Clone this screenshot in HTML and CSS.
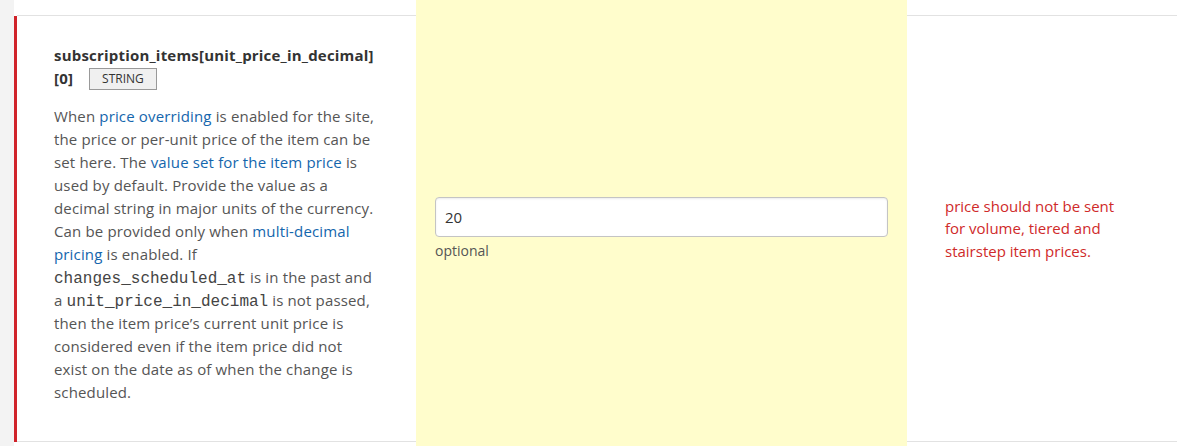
FILE: index.html
```html
<!DOCTYPE html>
<html>
<head>
<meta charset="utf-8">
<link rel="stylesheet" href="styles.css">
</head>
<body>
<div class="page">
  <div class="row row-prev">
    <div class="cell cell-desc"></div>
    <div class="cell cell-input"></div>
    <div class="cell cell-note"></div>
  </div>
  <div class="row row-active">
    <div class="cell cell-desc">
      <div class="param-name">subscription_items[unit_price_in_decimal]<wbr>[0]<span class="badge">STRING</span></div>
      <p class="desc">When <a href="#">price overriding</a> is enabled for the site, the price or per-unit price of the item can be set here. The <a href="#">value set for the item price</a> is used by default. Provide the value as a decimal string in major units of the currency. Can be provided only when <a href="#">multi-decimal pricing</a> is enabled. If <code>changes_scheduled_at</code> is in the past and a <code>unit_price_in_decimal</code> is not passed, then the item price’s current unit price is considered even if the item price did not exist on the date as of when the change is scheduled.</p>
    </div>
    <div class="cell cell-input">
      <div class="field">
        <input class="text-input" type="text" value="20">
        <div class="hint">optional</div>
      </div>
    </div>
    <div class="cell cell-note">
      <p class="note">price should not be sent for volume, tiered and stairstep item prices.</p>
    </div>
  </div>
  <div class="row row-next">
    <div class="cell cell-desc"></div>
    <div class="cell cell-input"></div>
    <div class="cell cell-note"></div>
  </div>
</div>
</body>
</html>
```
FILE: styles.css
```css
html, body {
  margin: 0;
  padding: 0;
}
body {
  background: #f3f3f3;
  font-family: "Open Sans", "Noto Sans", sans-serif;
  overflow: hidden;
}
.page {
  margin-left: 14px;
  background: #fff;
  height: 446px;
}
.row {
  display: grid;
  grid-template-columns: 402px 491px 1fr;
}
.row-prev {
  height: 16px;
}
.row-prev .cell-desc,
.row-next .cell-desc {
  margin-left: 3px;
}
.row-prev .cell-desc,
.row-prev .cell-note {
  border-bottom: 1px solid #e2e2e2;
}
.row-active {
  grid-template-columns: 399px 491px 1fr;
  height: 426px;
  border-left: 3px solid #d0232a;
}
.row-active .cell-desc,
.row-active .cell-note {
  border-bottom: 1px solid #e2e2e2;
}
.row-next {
  height: 4px;
}
.cell-input {
  background: #fffdcc;
}
.row-active .cell-desc {
  padding: 28px 37px 30px 37px;
  color: #555;
}
.param-name {
  font-weight: 700;
  font-size: 15px;
  line-height: 23px;
  letter-spacing: 0.2px;
  color: #333;
}
.badge {
  display: inline-block;
  margin-left: 16px;
  padding: 0 12px;
  height: 20px;
  line-height: 20px;
  font-size: 12px;
  font-weight: 400;
  letter-spacing: 0;
  color: #333;
  background: #f0f0f0;
  border: 1px solid #999;
  vertical-align: 1px;
}
.desc {
  margin: 15px 0 0;
  font-size: 15px;
  line-height: 23px;
  letter-spacing: 0.15px;
}
.desc a {
  color: #1466ad;
  text-decoration: none;
}
.desc code {
  font-family: "Liberation Mono", "DejaVu Sans Mono", monospace;
  font-size: 16px;
  line-height: 16px;
  letter-spacing: 0;
  color: #444;
}
.row-active .cell-input {
  display: flex;
  align-items: center;
  padding: 0 19px;
}
.field {
  width: 100%;
  padding-bottom: 1px;
}
.text-input {
  display: block;
  box-sizing: border-box;
  width: 100%;
  height: 40px;
  padding: 0 9px;
  border: 1px solid #c4c4c4;
  border-radius: 4px;
  box-shadow: inset 0 1px 2px rgba(0,0,0,0.08);
  font-family: "Open Sans", sans-serif;
  font-size: 15px;
  color: #333;
  background: #fff;
}
.hint {
  margin-top: 4px;
  font-size: 14px;
  line-height: 20px;
  color: #555;
}
.row-active .cell-note {
  display: flex;
  align-items: center;
  padding-left: 38px;
}
.note {
  margin: 0;
  width: 185px;
  font-size: 15px;
  line-height: 22.5px;
  color: #cf2a2a;
}
```
